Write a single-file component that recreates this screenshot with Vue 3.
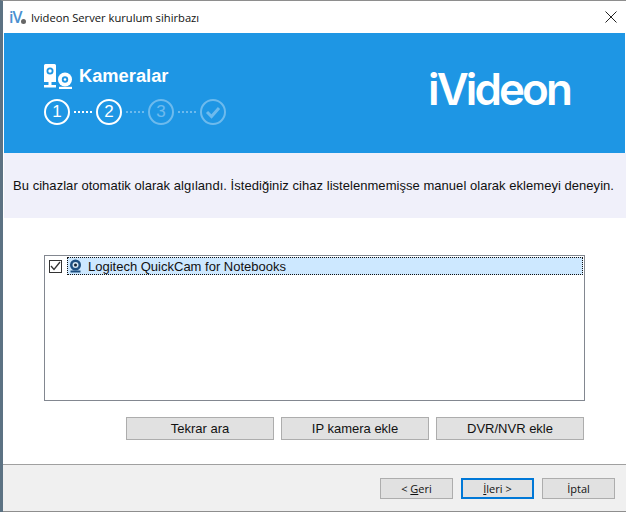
<template>
  <div class="window">
    <header class="titlebar">
      <div class="app-icon">
        <span class="iv">iV</span><span class="iv-dot"></span>
      </div>
      <span class="title">Ivideon Server kurulum sihirbazı</span>
      <svg class="close" width="12" height="12" viewBox="0 0 12 12"><path d="M.5.5l11 11M11.500.5l-11 11" stroke="#222" stroke-width="1" fill="none"/></svg>
    </header>

    <section class="banner">
      <div class="banner-left">
        <div class="heading">
          <svg class="cam" width="30" height="26" viewBox="0 0 30 26">
            <path d="M0 1.500A1.500 1.500 0 0 1 1.500 0h9A1.500 1.500 0 0 1 12 1.500V18H0z" fill="#fff"/>
            <circle cx="6" cy="7" r="3.500" fill="#1e96e4"/><circle cx="6" cy="7" r="1.700" fill="#fff"/>
            <rect x="4.500" y="18" width="3" height="3" fill="#fff"/><rect x="0" y="21" width="12" height="2.500" fill="#fff"/>
            <circle cx="21" cy="15.500" r="7" fill="#fff"/><circle cx="21" cy="15.500" r="3.200" fill="#1e96e4"/><circle cx="21" cy="15.500" r="1.300" fill="#fff"/>
            <rect x="15" y="22.800" width="13" height="2.200" fill="#fff"/>
          </svg>
          <h1>Kameralar</h1>
        </div>
        <div class="steps">
          <template v-for="(s, i) in steps" :key="s.label">
            <span v-if="i" class="dots" :class="{ dim: !s.active }"></span>
            <span class="step" :class="{ dim: !s.active }">
              <template v-if="s.label !== 'ok'">{{ s.label }}</template>
              <svg v-else width="16" height="14" viewBox="0 0 16 14"><path d="M2 7l4.500 4.500L14 3" stroke="#fff" stroke-width="3" fill="none"/></svg>
            </span>
          </template>
        </div>
      </div>
      <div class="logo">iVideon</div>
    </section>

    <section class="info">
      <p>Bu cihazlar otomatik olarak algılandı. İstediğiniz cihaz listelenmemişse manuel olarak eklemeyi deneyin.</p>
    </section>

    <main class="content">
      <div class="listbox">
        <div class="row">
          <span class="check">
            <svg width="11" height="10" viewBox="0 0 11 10"><path d="M1 5l3 3.500L10 1" stroke="#333" stroke-width="1.300" fill="none"/></svg>
          </span>
          <div class="item">
            <svg width="13" height="14" viewBox="0 0 13 14">
              <circle cx="6.500" cy="6" r="5.500" fill="#1d4f80"/><circle cx="6.500" cy="6" r="3" fill="#d5e6f2"/><circle cx="6.500" cy="6" r="1.500" fill="#123"/>
              <rect x="1.500" y="11.500" width="10" height="2" fill="#1d4f80"/>
            </svg>
            <span>Logitech QuickCam for Notebooks</span>
          </div>
        </div>
      </div>
      <div class="actions">
        <button class="btn">Tekrar ara</button>
        <button class="btn">IP kamera ekle</button>
        <button class="btn">DVR/NVR ekle</button>
      </div>
    </main>

    <footer class="footer">
      <button class="nav">&lt; <u>G</u>eri</button>
      <button class="nav primary"><u>İ</u>leri &gt;</button>
      <button class="nav cancel">İptal</button>
    </footer>
  </div>
</template>

<script setup>
const steps = [
  { label: '1', active: true },
  { label: '2', active: true },
  { label: '3', active: false },
  { label: 'ok', active: false }
]
</script>

<style>
html, body { margin: 0; padding: 0; background: #fff; }
</style>

<style scoped>
.window {
  width: 626px;
  height: 512px;
  box-sizing: border-box;
  display: flex;
  flex-direction: column;
  border-top: 1px solid #8e8e8e;
  border-left: 3px solid #5c7283;
  background: #fff;
  font-family: "Liberation Sans", Arial, sans-serif;
  font-size: 13px;
  color: #111;
  overflow: hidden;
}
.titlebar {
  height: 32px;
  flex: none;
  box-sizing: border-box;
  display: flex;
  align-items: center;
  padding: 0 9px 0 6px;
  font-family: "Open Sans", sans-serif;
  font-size: 11.200px;
}
.app-icon {
  position: relative;
  width: 16px;
  height: 18px;
  margin-right: 6px;
}
.iv {
  font: 600 16px/18px "Open Sans", sans-serif;
  color: #4a8fd0;
  letter-spacing: -1px;
}
.iv-dot {
  position: absolute;
  right: -1px;
  bottom: 2px;
  width: 5px;
  height: 5px;
  border-radius: 50%;
  background: #666;
}
.title { flex: 1; }
.close { flex: none; }
.banner {
  height: 120px;
  flex: none;
  box-sizing: border-box;
  margin: 0 1px;
  background: #1e96e4;
  color: #fff;
  display: flex;
  justify-content: space-between;
  align-items: flex-start;
  padding: 30px 55px 0 40px;
}
.heading {
  display: flex;
  align-items: center;
  gap: 5px;
  height: 27px;
}
.heading h1 {
  margin: 0;
  font: 700 18.300px/1 "Liberation Sans", sans-serif;
}
.steps {
  display: flex;
  align-items: center;
  margin-top: 9px;
}
.step {
  box-sizing: border-box;
  width: 26px;
  height: 26px;
  border: 2.500px solid #fff;
  border-radius: 50%;
  display: flex;
  align-items: center;
  justify-content: center;
  font-size: 17px;
}
.step.dim { opacity: 0.35; }
.dots {
  width: 18px;
  margin: 0 4px;
  border-top: 2px dotted #fff;
}
.dots.dim { opacity: 0.35; }
.logo {
  margin-top: 0;
  font: 600 44px/1.2 "Inter", sans-serif;
  letter-spacing: -2.900px;
}
.info {
  height: 65px;
  flex: none;
  box-sizing: border-box;
  margin-left: 1px;
  background: #f0f0fa;
  display: flex;
  align-items: center;
  padding-left: 9px;
}
.info p { margin: 0; white-space: nowrap; letter-spacing: 0.040px; }
.content {
  flex: 1;
  padding: 37px 41px 0 41px;
}
.listbox {
  box-sizing: border-box;
  height: 146px;
  border: 1px solid #828790;
  padding: 1px;
}
.row {
  display: flex;
  align-items: center;
  height: 18px;
  padding-left: 3px;
}
.check {
  box-sizing: border-box;
  width: 13px;
  height: 13px;
  border: 1px solid #333;
  display: flex;
  align-items: center;
  justify-content: center;
  flex: none;
  margin-right: 5px;
}
.item {
  flex: 1;
  height: 18px;
  box-sizing: border-box;
  display: flex;
  align-items: center;
  gap: 6px;
  padding-left: 2px;
  background: #cde8ff;
  outline: 1px dotted #111;
  outline-offset: -1px;
}
.actions {
  display: flex;
  justify-content: flex-end;
  gap: 7px;
  margin: 16px 1px 0 0;
}
.btn, .nav {
  box-sizing: border-box;
  background: #e1e1e1;
  border: 1px solid #adadad;
  color: #111;
  padding: 0;
  border-radius: 0;
}
.btn {
  width: 148px;
  height: 23px;
  font: 13px "Liberation Sans", Arial, sans-serif;
}
.footer {
  height: 48px;
  flex: none;
  box-sizing: border-box;
  background: #f0f0f0;
  border-top: 1px solid #a0a0a0;
  border-bottom: 1px solid #8e8e8e;
  display: flex;
  align-items: center;
  gap: 8px;
  padding: 0 0 0 377px;
}
.nav {
  width: 73px;
  height: 21px;
  font: 11px "Open Sans", sans-serif;
}
.primary {
  border: 2px solid #0078d7;
}
</style>
